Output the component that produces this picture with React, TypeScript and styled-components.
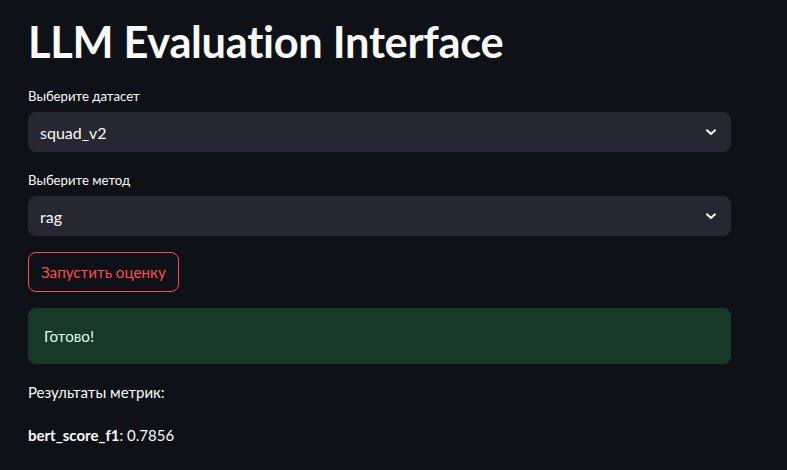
import React from "react";
import styled, { createGlobalStyle } from "styled-components";

const Global = createGlobalStyle`
  html, body { margin: 0; padding: 0; background: #0e1117; }
  body { font-family: "Lato", "Noto Sans", sans-serif; color: #fafafa; }
`;

const Page = styled.main`
  width: 703px;
  padding: 14px 0 0 28px;
  display: flex;
  flex-direction: column;
  gap: 16px;
`;

const Title = styled.h1`
  margin: 0;
  font-size: 43.4px;
  font-weight: 700;
  line-height: 54px;
  color: #fafafa;
  letter-spacing: -0.3px;
`;

const Field = styled.div`
  display: flex;
  flex-direction: column;
`;

const Label = styled.label`
  font-size: 13.2px;
  line-height: 20px;
  min-height: 24px;
  margin-bottom: 4px;
  display: flex;
  align-items: center;
  color: #fafafa;
`;

const Select = styled.div`
  height: 40px;
  box-sizing: border-box;
  background: #262730;
  border-radius: 8px;
  display: flex;
  align-items: center;
  justify-content: space-between;
  padding: 0 14px 0 12px;
  font-size: 16px;
  color: #fafafa;
`;

const Chevron = () => (
  <svg width="12" height="12" viewBox="0 0 12 12" fill="none">
    <path d="M2 4.2 L6 8 L10 4.2" stroke="#fafafa" strokeWidth="2" strokeLinecap="round" strokeLinejoin="round" />
  </svg>
);

const Button = styled.button`
  align-self: flex-start;
  height: 40px;
  padding: 0 12px;
  background: transparent;
  border: 1px solid #ff4b4b;
  border-radius: 8px;
  color: #ff4b4b;
  font-family: inherit;
  font-size: 15.2px;
  cursor: pointer;
`;

const Alert = styled.div`
  height: 56px;
  box-sizing: border-box;
  padding: 16px;
  background: #173928;
  border-radius: 8px;
  color: #dffde9;
  font-size: 15.2px;
  line-height: 24px;
`;

const Para = styled.p<{ $mb?: number }>`
  margin: 0 0 ${(p) => p.$mb ?? 0}px;
  font-size: 15px;
  line-height: 24px;
  color: #fafafa;
`;

export default function App() {
  return (
    <>
      <Global />
      <Page>
        <Title>LLM Evaluation Interface</Title>
        <Field>
          <Label>Выберите датасет</Label>
          <Select>
            <span>squad_v2</span>
            <Chevron />
          </Select>
        </Field>
        <Field>
          <Label>Выберите метод</Label>
          <Select>
            <span>rag</span>
            <Chevron />
          </Select>
        </Field>
        <Button>Запустить оценку</Button>
        <Alert>Готово!</Alert>
        <Para $mb={3}>Результаты метрик:</Para>
        <Para>
          <b>bert_score_f1</b>: 0.7856
        </Para>
      </Page>
    </>
  );
}
